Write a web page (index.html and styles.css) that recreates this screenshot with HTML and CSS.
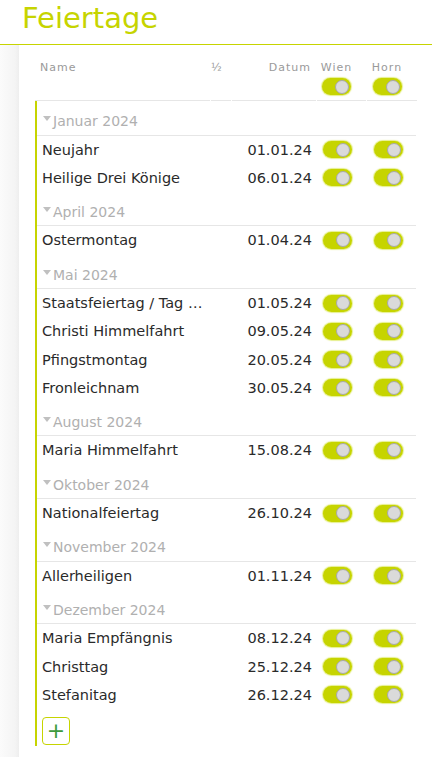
FILE: index.html
```
<!DOCTYPE html>
<html lang="de">
<head>
    <meta charset="UTF-8">
    <meta name="viewport" content="width=device-width, initial-scale=1.0">
    <title>Feiertage</title>
    <link rel="stylesheet" href="styles.css">
</head>
<body>
    <h1 class="title">Feiertage</h1>
    <div class="page">
        <div class="side"></div>
        <div class="panel">
            <div class="row head">
                <div class="cell">Name</div>
                <div class="cell">½</div>
                <div class="cell date">Datum</div>
                <div class="cell loc">Wien<span class="toggle"><span class="knob"></span></span></div>
                <div class="cell loc">Horn<span class="toggle"><span class="knob"></span></span></div>
            </div>
            <div class="list" id="list"></div>
        </div>
    </div>

    <script>
        const groups = [
            { month: "Januar 2024", days: [["Neujahr", "01.01.24"], ["Heilige Drei Könige", "06.01.24"]] },
            { month: "April 2024", days: [["Ostermontag", "01.04.24"]] },
            { month: "Mai 2024", days: [["Staatsfeiertag / Tag der Arbeit", "01.05.24"], ["Christi Himmelfahrt", "09.05.24"], ["Pfingstmontag", "20.05.24"], ["Fronleichnam", "30.05.24"]] },
            { month: "August 2024", days: [["Maria Himmelfahrt", "15.08.24"]] },
            { month: "Oktober 2024", days: [["Nationalfeiertag", "26.10.24"]] },
            { month: "November 2024", days: [["Allerheiligen", "01.11.24"]] },
            { month: "Dezember 2024", days: [["Maria Empfängnis", "08.12.24"], ["Christtag", "25.12.24"], ["Stefanitag", "26.12.24"]] }
        ];

        const list = document.getElementById("list");
        const toggle = '<span class="toggle"><span class="knob"></span></span>';

        groups.forEach(group => {
            const g = document.createElement("div");
            g.className = "group";
            g.innerHTML = `<span class="caret"></span>${group.month}`;
            list.appendChild(g);

            group.days.forEach(day => {
                const row = document.createElement("div");
                row.className = "row day";
                row.innerHTML = `
                    <div class="cell name" title="${day[0]}">${day[0]}</div>
                    <div class="cell"></div>
                    <div class="cell date">${day[1]}</div>
                    <div class="cell loc">${toggle}</div>
                    <div class="cell loc">${toggle}</div>
                `;
                list.appendChild(row);
            });
        });

        const add = document.createElement("button");
        add.className = "add-btn";
        add.textContent = "+";
        list.appendChild(add);
    </script>
</body>
</html>
```
FILE: styles.css
```
* {
  margin: 0;
  padding: 0;
  box-sizing: border-box;
  font-family: "DejaVu Sans", sans-serif;
}

body {
  background-color: white;
  color: #2a2a2a;
}

.title {
  height: 45px;
  padding: 1px 0 0 22px;
  font-size: 29px;
  font-weight: normal;
  color: #c6d400;
  border-bottom: 1px solid #c6d400;
}

.page {
  display: flex;
  min-height: 712px;
}

.side {
  width: 19px;
  background: linear-gradient(to right, #fbfbfb, #f4f4f4 80%, #eeeeee);
}

.panel {
  flex: 1;
  padding-left: 16px;
  width: 380px;
}

.row {
  display: grid;
  grid-template-columns: 175px 20px 84px 49px 50px;
  column-gap: 1px;
  width: 381px;
}

.head {
  height: 56px;
}

.head .cell {
  border-bottom: 1px solid #e6e6e6;
  font-size: 11px;
  letter-spacing: 1px;
  color: #9a9a9a;
  padding-top: 16px;
}

.head .cell:first-child {
  padding-left: 5px;
}

.head .date {
  text-align: right;
  padding-right: 5px;
}

.head .loc {
  display: flex;
  flex-direction: column;
  align-items: center;
  gap: 4px;
  padding-right: 10px;
}

.list {
  border-left: 2px solid #c6d400;
  width: 381px;
  padding-bottom: 1px;
}

.group {
  height: 34.5px;
  padding: 12px 0 0 6px;
  font-size: 14px;
  color: #b0b0b0;
  border-bottom: 1px solid #e6e6e6;
}

.caret {
  display: inline-block;
  width: 0;
  height: 0;
  border-left: 4px solid transparent;
  border-right: 4px solid transparent;
  border-top: 5px solid #c0c0c0;
  margin-right: 2px;
  vertical-align: 5px;
}

.day {
  height: 28.2px;
  align-items: center;
  font-size: 14.5px;
}

.day .name {
  padding-left: 5px;
  white-space: nowrap;
  overflow: hidden;
  text-overflow: ellipsis;
  padding-right: 2px;
}

.day .date {
  text-align: right;
  padding-right: 6px;
}

.day .loc {
  display: flex;
  justify-content: center;
  padding-right: 12px;
}

.toggle {
  display: flex;
  justify-content: flex-end;
  align-items: center;
  width: 29px;
  height: 17px;
  padding: 0 2px;
  border-radius: 9px;
  background-color: #c6d400;
  box-shadow: 0 0 1px 1px rgba(220, 232, 90, 0.7);
}

.knob {
  width: 14px;
  height: 14px;
  border-radius: 50%;
  background-color: #dadada;
  border: 1px solid #a8a8a8;
}

.add-btn {
  display: block;
  width: 28px;
  height: 28px;
  margin: 8px 0 0 5px;
  background: white;
  border: 1px solid #c6d400;
  border-radius: 4px;
  color: #3d9a3d;
  font-size: 22px;
  line-height: 24px;
  cursor: pointer;
}
```
